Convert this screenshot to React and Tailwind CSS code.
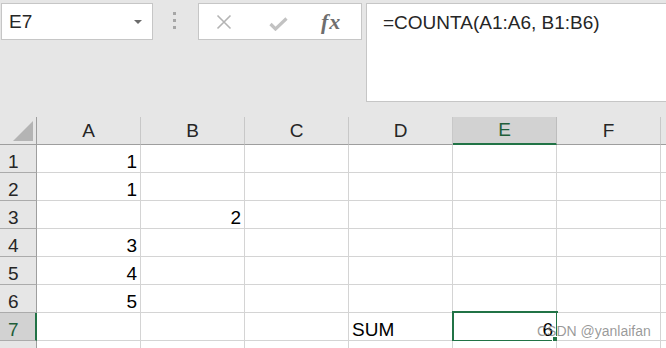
import React from 'react'

const font = { fontFamily: '"Liberation Sans", Arial, sans-serif' }

const columns = ['A', 'B', 'C', 'D', 'E', 'F', 'G']

// cell values, text left aligned, numbers right aligned
const sheet = {
    1: { A: '1' },
    2: { A: '1' },
    3: { B: '2' },
    4: { A: '3' },
    5: { A: '4' },
    6: { A: '5' },
    7: { D: 'SUM', E: '6' },
    8: {},
}

function Toolbar() {
    return (
        <div className="h-[117px] pt-[3px] flex items-start">
            <div className="ml-[1px] w-[152px] h-[37px] bg-white border border-[#c6c6c6] flex items-center justify-between pl-[7px] pr-[10px]">
                <span className="text-[19px] text-[#262626] leading-[20px]">E7</span>
                <svg width="8" height="4" viewBox="0 0 8 4">
                    <path d="M0 0h8L4 4z" fill="#6b6b6b" />
                </svg>
            </div>
            <div className="ml-[20px] mt-[9px] flex flex-col gap-[4px]">
                <div className="w-[3px] h-[3px] bg-[#a6a6a6]"></div>
                <div className="w-[3px] h-[3px] bg-[#a6a6a6]"></div>
                <div className="w-[3px] h-[3px] bg-[#a6a6a6]"></div>
            </div>
            <div className="ml-[22px] w-[164px] h-[37px] bg-white border border-[#c6c6c6] flex items-center pl-[17px]">
                <svg width="16" height="16" viewBox="0 0 16 16">
                    <path d="M1.5 1.5l13 13M14.5 1.5l-13 13" stroke="#b4b4b4" strokeWidth="1.6" fill="none" />
                </svg>
                <svg className="ml-[37px] mt-[4px]" width="19" height="14" viewBox="0 0 19 14">
                    <path d="M1.5 7l5 5L17.5 1.5" stroke="#c2c2c2" strokeWidth="3.2" fill="none" />
                </svg>
                <span
                    className="ml-[33px] text-[22px] italic font-bold text-[#6e6e6e] leading-[20px] tracking-[1px]"
                    style={{ fontFamily: '"Liberation Serif", "Times New Roman", serif' }}
                >
                    fx
                </span>
            </div>
            <div className="ml-[4px] flex-1 h-[99px] bg-white border border-r-0 border-[#c6c6c6] pl-[16px] pt-[8px]">
                <span className="text-[19px] text-[#262626] leading-[20px] whitespace-nowrap">=COUNTA(A1:A6, B1:B6)</span>
            </div>
        </div>
    )
}

function HeaderRow() {
    return (
        <div className="flex h-[28px]">
            <div className="shrink-0 w-[37px] h-full border-r border-b border-[#9e9e9e] flex items-end justify-end pr-[3px] pb-[3px]">
                <svg width="20" height="20" viewBox="0 0 20 20">
                    <path d="M20 0V20H0z" fill="#b4b4b4" />
                </svg>
            </div>
            {columns.map((col) => (
                <div
                    key={col}
                    className={
                        col === 'E'
                            ? 'shrink-0 w-[104px] h-full bg-[#d2d2d2] border-r border-r-[#bdbdbd] border-b-2 border-b-[#217346] flex items-center justify-center text-[19px] leading-[20px] text-[#1f5e3a]'
                            : 'shrink-0 w-[104px] h-full border-r border-r-[#c8c8c8] border-b border-b-[#9e9e9e] flex items-center justify-center text-[19px] leading-[20px] text-[#262626]'
                    }
                >
                    {col !== 'G' && col}
                </div>
            ))}
        </div>
    )
}

function Row({ num, cells }) {
    const active = num === 7
    return (
        <div className="flex h-[28px]">
            <div
                className={
                    active
                        ? 'shrink-0 w-[37px] h-full bg-[#d2d2d2] border-r-2 border-r-[#217346] border-b border-b-[#ababab] flex items-end pl-[8px] text-[19px] leading-[20px] text-[#1f5e3a]'
                        : 'shrink-0 w-[37px] h-full border-r border-r-[#9e9e9e] border-b border-b-[#ababab] flex items-end pl-[8px] text-[19px] leading-[20px] text-[#262626]'
                }
            >
                {num < 8 && num}
            </div>
            {columns.map((col) => {
                const value = cells[col]
                const isNumber = value !== undefined && !isNaN(Number(value))
                return (
                    <div
                        key={col}
                        className={
                            isNumber
                                ? 'relative shrink-0 w-[104px] h-full bg-white border-r border-b border-[#d4d4d4] flex items-end justify-end pr-[3px] text-[19px] leading-[20px] text-black'
                                : 'relative shrink-0 w-[104px] h-full bg-white border-r border-b border-[#d4d4d4] flex items-end justify-start pl-[3px] text-[19px] leading-[20px] text-black'
                        }
                    >
                        {value}
                        {active && col === 'E' && (
                            <>
                                <div className="absolute left-[-1px] top-[-2px] w-[106px] h-[31px] border-2 border-[#217346]"></div>
                                <div className="absolute left-[99px] top-[23px] w-[8px] h-[8px] bg-[#217346] border border-white"></div>
                            </>
                        )}
                    </div>
                )
            })}
        </div>
    )
}

export default function App() {
    return (
        <div className="relative w-[666px] h-[348px] overflow-hidden bg-[#e6e6e6]" style={font}>
            <Toolbar />
            <div className="w-[800px]">
                <HeaderRow />
                {Object.keys(sheet).map((n) => (
                    <Row key={n} num={Number(n)} cells={sheet[n]} />
                ))}
            </div>
            <span className="absolute left-[537px] top-[321px] text-[14px] leading-[20px] text-[rgba(120,120,120,0.75)] whitespace-nowrap">
                CSDN @yanlaifan
            </span>
        </div>
    )
}
